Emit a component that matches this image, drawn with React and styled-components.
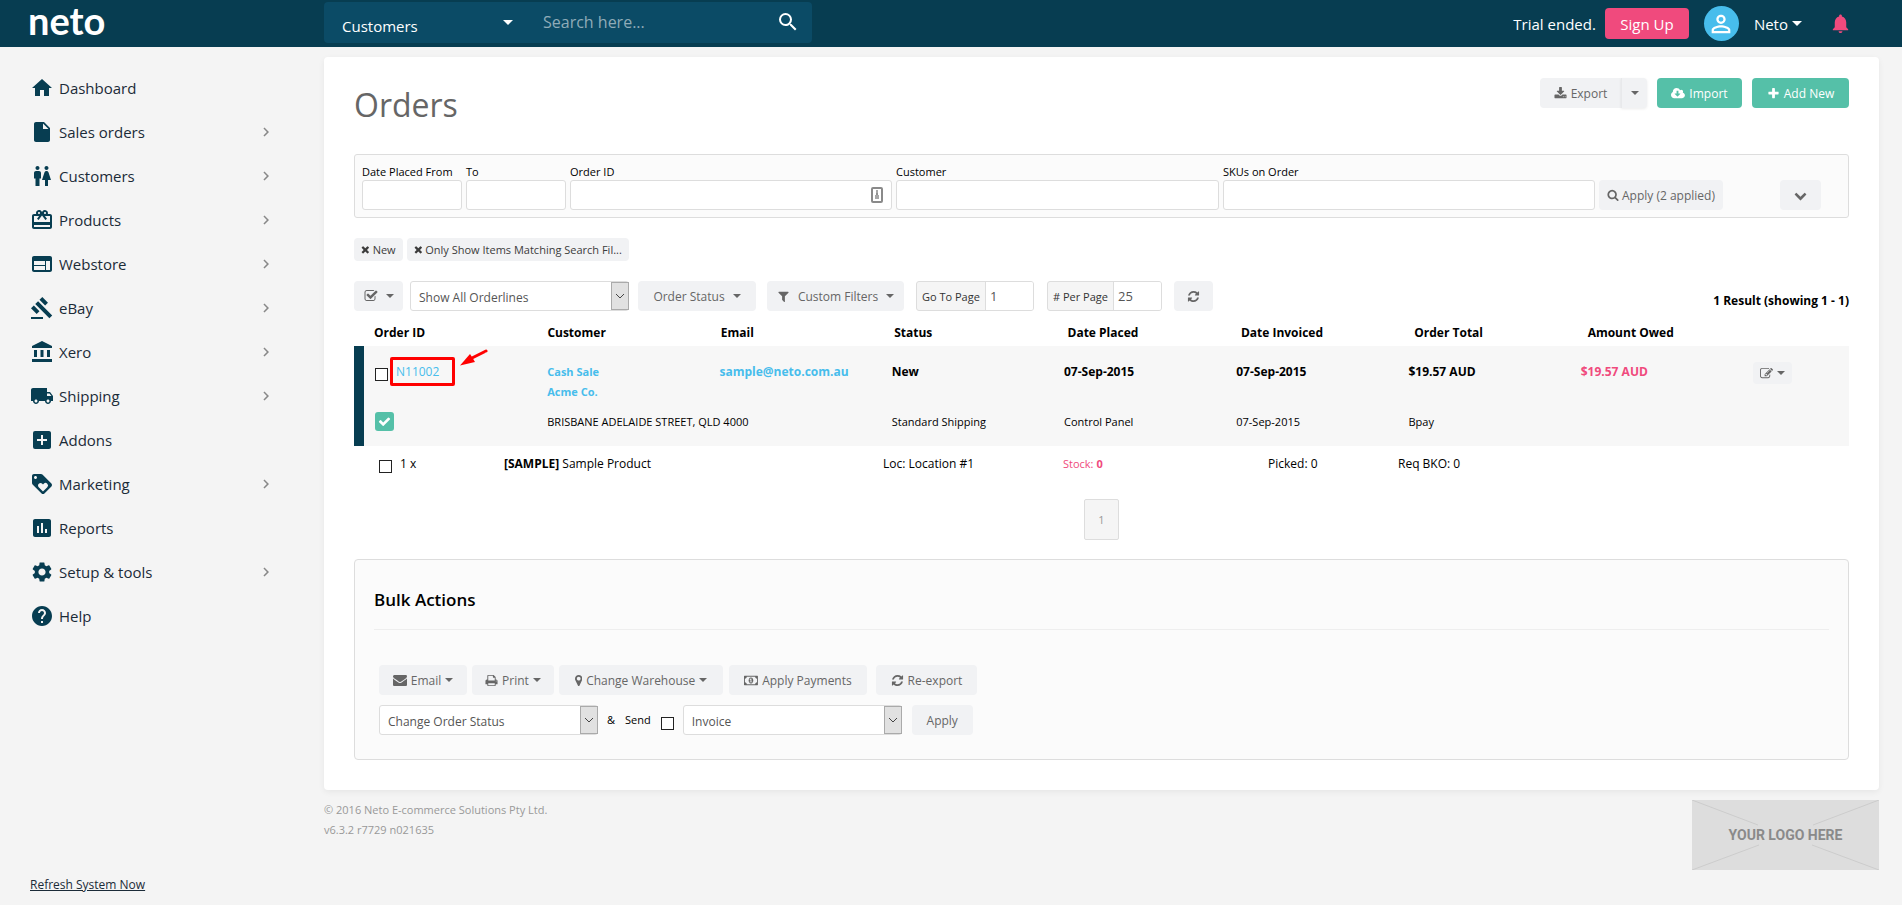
import React, { useState } from 'react'
import styled, { createGlobalStyle, css } from 'styled-components'
import {
    MdHome,
    MdInsertDriveFile,
    MdWc,
    MdCardGiftcard,
    MdWeb,
    MdGavel,
    MdAccountBalance,
    MdLocalShipping,
    MdAddBox,
    MdLoyalty,
    MdAssessment,
    MdSettings,
    MdHelp,
    MdChevronRight,
    MdPersonOutline,
    MdNotifications,
    MdSearch
} from 'react-icons/md'

const NAVY = '#073d51'
const GREEN = '#55c0a8'
const PINK = '#f04a7d'
const BLUE = '#47bdec'

const GlobalStyle = createGlobalStyle`
    *, *::before, *::after {
        box-sizing: border-box;
    }

    body {
        margin: 0;
        background: #f4f4f4;
        color: #000;
        font-family: "Open Sans", "Noto Sans", sans-serif;
        font-size: 12px;
        line-height: 20px;
    }

    button, input, select {
        font-family: inherit;
    }

    a {
        color: inherit;
        text-decoration: none;
    }
`

/* ---------- icons ---------- */

const ICONS = {
    search: 'M1216 832q0-185-131.5-316.5t-316.5-131.5-316.5 131.5-131.5 316.5 131.5 316.5 316.5 131.5 316.5-131.5 131.5-316.5zm512 832q0 52-38 90t-90 38q-54 0-90-38l-343-342q-179 124-399 124-143 0-273.5-55.5t-225-150-150-225-55.5-273.5 55.5-273.5 150-225 225-150 273.5-55.5 273.5 55.5 225 150 150 225 55.5 273.5q0 220-124 399l343 343q37 37 37 90z',
    plus: 'M1600 736v192q0 40-28 68t-68 28h-416v416q0 40-28 68t-68 28h-192q-40 0-68-28t-28-68v-416h-416q-40 0-68-28t-28-68v-192q0-40 28-68t68-28h416v-416q0-40 28-68t68-28h192q40 0 68 28t28 68v416h416q40 0 68 28t28 68z',
    times: 'M1490 1322q0 40-28 68l-136 136q-28 28-68 28t-68-28l-294-294-294 294q-28 28-68 28t-68-28l-136-136q-28-28-28-68t28-68l294-294-294-294q-28-28-28-68t28-68l136-136q28-28 68-28t68 28l294 294 294-294q28-28 68-28t68 28l136 136q28 28 28 68t-28 68l-294 294 294 294q28 28 28 68z',
    check: 'M1671 566q0 40-28 68l-724 724-136 136q-28 28-68 28t-68-28l-136-136-362-362q-28-28-28-68t28-68l136-136q28-28 68-28t68 28l294 295 656-657q28-28 68-28t68 28l136 136q28 28 28 68z',
    chevronDown: 'M1683 808l-742 741q-19 19-45 19t-45-19l-742-741q-19-19-19-45.5t19-45.5l166-165q19-19 45-19t45 19l531 531 531-531q19-19 45-19t45 19l166 165q19 19 19 45.5t-19 45.5z',
    download: 'M1344 1344q0-26-19-45t-45-19-45 19-19 45 19 45 45 19 45-19 19-45zm256 0q0-26-19-45t-45-19-45 19-19 45 19 45 45 19 45-19 19-45zm128-224v320q0 40-28 68t-68 28h-1472q-40 0-68-28t-28-68v-320q0-40 28-68t68-28h465l135 136q58 56 136 56t136-56l136-136h464q40 0 68 28t28 68zm-325-569q17 41-14 70l-448 448q-18 19-45 19t-45-19l-448-448q-31-29-14-70 17-39 59-39h256v-448q0-26 19-45t45-19h256q26 0 45 19t19 45v448h256q42 0 59 39z',
    cloud: 'M1216 928q0-14-9-23t-23-9h-224v-352q0-13-9.5-22.5t-22.5-9.5h-192q-13 0-22.5 9.5t-9.5 22.5v352h-224q-13 0-22.5 9.5t-9.5 22.5q0 14 9 23l352 352q9 9 23 9t23-9l351-351q10-12 10-24zm640 224q0 159-112.5 271.5t-271.5 112.5h-1088q-185 0-316.5-131.5t-131.5-316.5q0-130 70-240t188-165q-2-30-2-43 0-212 150-362t362-150q156 0 285.5 87t188.5 231q71-62 166-62 106 0 181 75t75 181q0 76-41 138 130 31 213.5 135.5t83.5 238.5z',
    filter: 'M1595 295q17 41-14 70l-493 493v742q0 42-39 59-13 5-25 5-27 0-45-19l-256-256q-19-19-19-45v-486l-493-493q-31-29-14-70 17-39 59-39h1280q42 0 59 39z',
    refresh: 'M1639 1056q0 5-1 7-64 268-268 434.5t-478 166.5q-146 0-282.5-55t-243.5-157l-129 129q-19 19-45 19t-45-19-19-45v-448q0-26 19-45t45-19h448q26 0 45 19t19 45-19 45l-137 137q71 66 161 102t187 36q134 0 250-65t186-179q11-17 53-117 8-23 30-23h192q13 0 22.5 9.5t9.5 22.5zm25-800v448q0 26-19 45t-45 19h-448q-26 0-45-19t-19-45 19-45l138-138q-148-137-349-137-134 0-250 65t-186 179q-11 17-53 117-8 23-30 23h-199q-13 0-22.5-9.5t-9.5-22.5v-7q65-268 270-434.5t480-166.5q146 0 284 55.5t245 156.5l130-129q19-19 45-19t45 19 19 45z',
    checkSquare: 'M1472 930v318q0 119-84.5 203.5t-203.5 84.5h-832q-119 0-203.5-84.5t-84.5-203.5v-832q0-119 84.5-203.5t203.5-84.5h832q63 0 117 25 15 7 18 23 3 17-9 29l-49 49q-10 10-23 10-3 0-9-2-23-6-45-6h-832q-66 0-113 47t-47 113v832q0 66 47 113t113 47h832q66 0 113-47t47-113v-254q0-13 9-22l64-64q10-10 23-10 6 0 12 3 20 8 20 29zm231-489l-814 814q-24 24-57 24t-57-24l-430-430q-24-24-24-57t24-57l110-110q24-24 57-24t57 24l263 263 647-647q24-24 57-24t57 24l110 110q24 24 24 57t-24 57z',
    edit: 'M888 1184l116-116-152-152-116 116v56h96v96h56zm440-720q-16-16-33 1l-350 350q-17 17-1 33t33-1l350-350q17-17 1-33zm80 594v190q0 119-84.5 203.5t-203.5 84.5h-832q-119 0-203.5-84.5t-84.5-203.5v-832q0-119 84.5-203.5t203.5-84.5h832q63 0 117 25 15 7 18 23 3 17-9 29l-49 49q-14 14-32 8-23-6-45-6h-832q-66 0-113 47t-47 113v832q0 66 47 113t113 47h832q66 0 113-47t47-113v-126q0-13 9-22l64-64q15-15 35-7t20 29zm-96-738l288 288-672 672h-288v-288zm444 132l-92 92-288-288 92-92q28-28 68-28t68 28l152 152q28 28 28 68t-28 68z',
    envelope: 'M1792 710v794q0 66-47 113t-113 47h-1472q-66 0-113-47t-47-113v-794q44 49 101 87 362 246 497 345 57 42 92.5 65.5t94.5 48 110 24.5h2q51 0 110-24.5t94.5-48 92.5-65.5q170-123 498-345 57-39 100-87zm0-294q0 79-49 151t-122 123q-376 261-468 325-10 7-42.5 31t-54 38.5-52 32.5-57.5 27-50 9h-2q-23 0-50-9t-57.5-27-52-32.5-54-38.5-42.5-31q-91-64-262-182.5t-205-142.5q-62-42-117-115.5t-55-136.5q0-78 41.5-130t118.5-52h1472q65 0 112.5 47t47.5 113z',
    print: 'M448 1536h896v-256h-896v256zm0-640h896v-384h-160q-40 0-68-28t-28-68v-160h-640v640zm1152 64q0-26-19-45t-45-19-45 19-19 45 19 45 45 19 45-19 19-45zm128 0v416q0 13-9.5 22.5t-22.5 9.5h-224v160q0 40-28 68t-68 28h-960q-40 0-68-28t-28-68v-160h-224q-13 0-22.5-9.5t-9.5-22.5v-416q0-79 56.5-135.5t135.5-56.5h64v-544q0-40 28-68t68-28h672q40 0 88 20t76 48l152 152q28 28 48 76t20 88v256h64q79 0 135.5 56.5t56.5 135.5z',
    marker: 'M1152 640q0-106-75-181t-181-75-181 75-75 181 75 181 181 75 181-75 75-181zm256 0q0 109-33 179l-364 774q-16 33-47.5 52t-67.5 19-67.5-19-46.5-52l-365-774q-33-70-33-179 0-212 150-362t362-150 362 150 150 362z',
    money: 'M768 1152h384v-96h-128v-448h-114l-148 137 77 80q42-37 55-57h2v288h-128v96zm512-256q0 70-21 142t-59.5 134-101.5 101-138 39-138-39-101.5-101-59.5-134-21-142 21-142 59.5-134 101.5-101 138-39 138 39 101.5 101 59.5 134 21 142zm512 256v-512q-106 0-181-75t-75-181h-1152q0 106-75 181t-181 75v512q106 0 181 75t75 181h1152q0-106 75-181t181-75zm128-832v1152q0 26-19 45t-45 19h-1792q-26 0-45-19t-19-45v-1152q0-26 19-45t45-19h1792q26 0 45 19t19 45z'
}

const BOXES = {
    cloud: '-64 0 1920 1792',
    money: '0 0 1920 1792',
    marker: '384 0 1024 1792',
    times: '192 0 1408 1792'
}

const Svg = styled.svg`
    flex: none;
    height: ${({ $size }) => $size}px;
    fill: currentColor;
`

const Icon = ({ name, size = 13 }) => (
    <Svg $size={size} viewBox={BOXES[name] || '0 0 1792 1792'} aria-hidden="true">
        <path d={ICONS[name]} />
    </Svg>
)

const Caret = styled.span`
    flex: none;
    width: 0;
    height: 0;
    border-left: 4px solid transparent;
    border-right: 4px solid transparent;
    border-top: 4px solid currentColor;
    margin-left: ${({ $space = 0 }) => $space}px;
`

/* ---------- header ---------- */

const Header = styled.header`
    display: flex;
    align-items: center;
    height: 47px;
    padding-right: 50px;
    background: ${NAVY};
    color: #fff;
    font-size: 15px;
`

const Brand = styled.div`
    flex: none;
    width: 324px;
    padding-left: 28px;
`

const BrandLink = styled.a`
    display: block;
    font-family: Lato, "Open Sans", sans-serif;
    font-size: 38px;
    font-weight: 700;
    line-height: 38px;
    padding-bottom: 8px;
`

const SearchBar = styled.form`
    display: flex;
    align-items: center;
    width: 488px;
    height: 41px;
    margin-bottom: 3px;
    border-radius: 4px;
    background: #0b4b66;
`

const SearchScope = styled.label`
    position: relative;
    display: flex;
    align-items: center;
    width: 200px;

    ${Caret} {
        position: absolute;
        right: 11px;
        border-width: 5px 5px 0;
        pointer-events: none;
    }
`

const ScopeSelect = styled.select`
    appearance: none;
    width: 100%;
    height: 41px;
    padding: 8px 18px 0;
    border: 0;
    background: transparent;
    color: #fff;
    font-size: 15px;
`

const SearchInput = styled.input`
    flex: 1;
    min-width: 0;
    padding: 0 0 0 19px;
    border: 0;
    background: transparent;
    color: #fff;
    font-size: 16px;

    &::placeholder {
        color: #8fabb8;
    }
`

const SearchButton = styled.button`
    display: flex;
    padding: 0 12px;
    border: 0;
    background: transparent;
    color: #fff;
    font-size: 24px;
`

const Account = styled.div`
    display: flex;
    align-items: center;
    margin-left: auto;
    white-space: nowrap;
`

const SignUp = styled.button`
    height: 31px;
    width: 84px;
    margin: 0 15px 0 9px;
    padding: 0;
    border: 0;
    border-radius: 4px;
    background: ${PINK};
    color: #fff;
    font-size: 15px;
`

const Avatar = styled.span`
    display: flex;
    align-items: center;
    justify-content: center;
    width: 35px;
    height: 35px;
    margin-right: 15px;
    border-radius: 50%;
    background: ${BLUE};
    font-size: 28px;
`

const PlainButton = styled.button`
    display: flex;
    align-items: center;
    padding: 0;
    border: 0;
    background: transparent;
    color: ${({ $color = '#fff' }) => $color};
    font-size: 15px;

    ${Caret} {
        border-width: 5px 5px 0;
    }
`

const Bell = styled(PlainButton)`
    margin-left: 27px;
    font-size: 23px;
`

/* ---------- sidebar ---------- */

const Body = styled.div`
    display: flex;
    align-items: stretch;
    min-height: calc(100vh - 47px);
`

const Sidebar = styled.aside`
    display: flex;
    flex: none;
    flex-direction: column;
    justify-content: space-between;
    width: 324px;
    padding: 19px 0 9px 30px;
`

const NavList = styled.ul`
    margin: 0;
    padding: 0;
    list-style: none;
`

const NavLink = styled.a`
    display: flex;
    align-items: center;
    height: 44px;
    width: 248px;
    color: #1b2b38;
    font-size: 15px;

    svg:first-child {
        width: 24px;
        height: 24px;
        margin-right: 5px;
        color: ${NAVY};
    }
`

const Chevron = styled(MdChevronRight)`
    width: 18px;
    height: 18px;
    margin-left: auto;
    margin-right: 3px;
    color: #888;
`

const RefreshLink = styled.a`
    color: #1b2b38;
    font-size: 12px;
    line-height: 22px;
    text-decoration: underline;
`

/* ---------- content ---------- */

const Content = styled.main`
    flex: 1;
    min-width: 0;
    padding: 10px 23px 0 0;
`

const Card = styled.section`
    padding: 21px 30px 30px;
    border-radius: 4px;
    background: #fff;
    box-shadow: 0 2px 6px rgba(0, 0, 0, 0.06);
`

const TitleRow = styled.div`
    display: flex;
    align-items: flex-start;
    justify-content: space-between;
    height: 76px;
`

const Title = styled.h1`
    margin: 0;
    color: #666;
    font-size: 32px;
    font-weight: 400;
    line-height: 54px;
`

const ButtonRow = styled.div`
    display: flex;
    gap: 10px;
`

const Button = styled.button`
    display: inline-flex;
    align-items: center;
    justify-content: center;
    flex: none;
    gap: ${({ $gap = 4 }) => $gap}px;
    height: 30px;
    width: ${({ $width }) => ($width ? `${$width}px` : 'auto')};
    padding: 0;
    border: 0;
    border-radius: 4px;
    background: #f1f2f4;
    color: #666;
    font-size: 12px;
    white-space: nowrap;

    ${({ $green }) => $green && css`
        background: ${GREEN};
        color: #fff;
    `}
`

const SplitButton = styled.div`
    display: flex;

    ${Button}:first-child {
        border-radius: 4px 0 0 4px;
    }

    ${Button}:last-child {
        border-left: 1px solid #e8e9eb;
        border-radius: 0 4px 4px 0;
        box-shadow: 0 1px 3px rgba(0, 0, 0, 0.08);
    }
`

const Filters = styled.form`
    display: grid;
    grid-template-columns: 100px 100px 322fr 323fr 372fr 124px 94px;
    align-items: end;
    column-gap: 4px;
    padding: 8px 27px 7px 7px;
    border: 1px solid #ddd;
    border-radius: 3px;
    background: #fbfbfb;
`

const Field = styled.label`
    position: relative;
    display: block;
    font-size: 11px;
    line-height: 17px;
    white-space: nowrap;
`

const TextInput = styled.input`
    display: block;
    width: 100%;
    height: 30px;
    padding: 0 6px;
    border: 1px solid #ddd;
    border-radius: 3px;
    background: #fff;
    color: #555;
    font-size: 12px;
`

const CardIcon = styled.svg`
    position: absolute;
    right: 9px;
    bottom: 7px;
    width: 12px;
    height: 16px;
`

const ExpandCell = styled.div`
    display: flex;
    justify-content: flex-end;
`

const Tags = styled.div`
    display: flex;
    gap: 4px;
    margin: 20px 0;
`

const Tag = styled.button`
    display: flex;
    align-items: center;
    gap: 3px;
    height: 23px;
    padding: 0 7px;
    border: 0;
    border-radius: 4px;
    background: #f1f2f4;
    color: #3c3c3c;
    font-size: 11px;
`

const Toolbar = styled.div`
    display: flex;
    align-items: center;
`

const Slot = styled.div`
    margin-right: ${({ $after }) => $after}px;
`

const SelectBox = styled.label`
    position: relative;
    display: block;
    flex: none;
    width: 219px;
    height: 30px;
`

const Select = styled.select`
    appearance: none;
    display: block;
    width: 100%;
    height: 30px;
    padding: 2px 26px 0 8px;
    border: 1px solid #ddd;
    border-radius: 3px;
    background: #fff;
    color: #555;
    font-size: 12px;
`

const SelectArrow = styled.span`
    position: absolute;
    top: 1px;
    right: 0;
    display: flex;
    align-items: center;
    justify-content: center;
    width: 18px;
    height: 28px;
    border: 1px solid #aaa;
    background: #e1e1e1;
    pointer-events: none;
`

const InputGroup = styled.label`
    display: flex;
    flex: none;
    width: ${({ $width }) => $width}px;
    height: 30px;
    border: 1px solid #ddd;
    border-radius: 3px;
    background: #f5f5f5;
    color: #333;
    font-size: 11px;
    line-height: 29px;
    overflow: hidden;
    white-space: nowrap;

    span {
        padding: 0 5px;
    }

    input {
        flex: 1;
        min-width: 0;
        height: 28px;
        padding: 0 4px;
        border: 0;
        border-left: 1px solid #ddd;
        background: #fff;
        color: #555;
        font-size: 13px;
    }
`

const ResultCount = styled.strong`
    margin-left: auto;
    padding-top: 10px;
    font-size: 12px;
    font-weight: 700;
`

/* ---------- orders table ---------- */

const Table = styled.table`
    display: block;
    margin-top: 12px;

    thead, tbody {
        display: block;
    }

    th, td {
        display: block;
        padding: 0;
        text-align: left;
    }
`

const HeadRow = styled.tr`
    display: grid;
    grid-template-columns: repeat(8, minmax(0, 1fr)) 88px;
    padding: 0 0 3px 20px;

    th {
        font-size: 12px;
        font-weight: 700;
    }
`

const OrderRow = styled.tr`
    display: grid;
    grid-template-columns: repeat(8, minmax(0, 1fr)) 96px;
    height: ${({ $height }) => $height}px;
    padding: ${({ $top }) => $top}px 0 0 11px;
    border-left: 10px solid ${NAVY};
    background: #f7f7f7;
    font-size: ${({ $bold }) => ($bold ? 12 : 11)}px;
    font-weight: ${({ $bold }) => ($bold ? 700 : 400)};
    white-space: nowrap;
`

const LineRow = styled.tr`
    display: grid;
    grid-template-columns: 125fr 379fr 180fr 205fr 130fr 451fr;
    padding: 8px 0 25px 25px;
    font-size: 12px;
`

const Check = styled.input`
    appearance: none;
    flex: none;
    width: 13px;
    height: 13px;
    margin: 6px 0 0;
    border: 1px solid #222;
    background: #fff;

    &:checked {
        background: #222;
    }
`

const IdCell = styled.div`
    position: relative;
    display: flex;
    align-items: flex-start;
    gap: 8px;
`

const OrderLink = styled.a`
    color: ${BLUE};
    font-size: 12px;
    font-weight: 400;
`

const Highlight = styled.span`
    position: absolute;
    top: -5px;
    left: 15px;
    width: 65px;
    height: 29px;
    border: 3px solid #f00;
    border-radius: 2px;
`

const Pointer = styled.svg`
    position: absolute;
    top: -13px;
    left: 85px;
    width: 28px;
    height: 18px;
`

const InfoLink = styled.a`
    display: block;
    color: ${BLUE};
    font-size: ${({ $small }) => ($small ? 11 : 12)}px;
`

const Pink = styled.span`
    color: ${PINK};
`

const StockText = styled(Pink)`
    font-size: 11px;
`

const Approved = styled.span`
    display: flex;
    align-items: center;
    justify-content: center;
    width: 19px;
    height: 19px;
    border-radius: 3px;
    background: ${GREEN};
    color: #fff;
`

const EditButton = styled(Button)`
    height: 22px;
`

const Pager = styled.nav`
    display: flex;
    justify-content: center;
`

const PageButton = styled.button`
    width: 35px;
    height: 41px;
    padding: 0;
    border: 1px solid #ddd;
    border-radius: 2px;
    background: #f5f5f5;
    color: #999;
    font-size: 11px;
`

/* ---------- bulk actions ---------- */

const Bulk = styled.section`
    margin-top: 19px;
    padding: 25px 19px 24px;
    border: 1px solid #ddd;
    border-radius: 4px;
    background: #fbfbfb;
`

const BulkTitle = styled.h2`
    margin: 0 0 35px;
    padding-bottom: 14px;
    border-bottom: 1px solid #eee;
    font-size: 17px;
    font-weight: 600;
    line-height: 30px;
`

const BulkRow = styled.div`
    display: flex;
    align-items: center;
    flex-wrap: wrap;
    padding: 0 5px;
    margin-bottom: ${({ $below = 0 }) => $below}px;
`

const SendLabel = styled.label`
    display: flex;
    align-items: flex-start;
    gap: 10px;
    margin: 0 9px;
    font-size: 11px;
    line-height: 18px;
`

/* ---------- footer ---------- */

const Footer = styled.footer`
    display: flex;
    justify-content: space-between;
    padding-top: 10px;
    color: #999;
    font-size: 11px;
`

const LogoBox = styled.div`
    position: relative;
    display: flex;
    align-items: center;
    justify-content: center;
    width: 187px;
    height: 70px;
    background: #ddd;
    color: #8a8a8a;
    font-family: Roboto, sans-serif;
    font-size: 14px;
    font-weight: 700;

    svg {
        position: absolute;
        inset: 0;
    }
`

const menu = [
    { label: 'Dashboard', icon: MdHome },
    { label: 'Sales orders', icon: MdInsertDriveFile, more: true },
    { label: 'Customers', icon: MdWc, more: true },
    { label: 'Products', icon: MdCardGiftcard, more: true },
    { label: 'Webstore', icon: MdWeb, more: true },
    { label: 'eBay', icon: MdGavel, more: true },
    { label: 'Xero', icon: MdAccountBalance, more: true },
    { label: 'Shipping', icon: MdLocalShipping, more: true },
    { label: 'Addons', icon: MdAddBox },
    { label: 'Marketing', icon: MdLoyalty, more: true },
    { label: 'Reports', icon: MdAssessment },
    { label: 'Setup & tools', icon: MdSettings, more: true },
    { label: 'Help', icon: MdHelp }
]

const columns = ['Order ID', 'Customer', 'Email', 'Status', 'Date Placed', 'Date Invoiced', 'Order Total', 'Amount Owed']

const Dropdown = ({ label, options }) => (
    <SelectBox>
        <Select aria-label={label}>
            {options.map(option => <option key={option}>{option}</option>)}
        </Select>
        <SelectArrow>
            <svg width="10" height="6" viewBox="0 0 10 6" fill="none" stroke="#444">
                <path d="M1 1l4 4 4-4" />
            </svg>
        </SelectArrow>
    </SelectBox>
)

const TopBar = () => (
    <Header>
        <Brand>
            <BrandLink href="#home">neto</BrandLink>
        </Brand>
        <SearchBar onSubmit={e => e.preventDefault()}>
            <SearchScope>
                <ScopeSelect aria-label="Search in">
                    <option>Customers</option>
                    <option>Orders</option>
                    <option>Products</option>
                </ScopeSelect>
                <Caret />
            </SearchScope>
            <SearchInput placeholder="Search here..." aria-label="Search" />
            <SearchButton aria-label="Search"><MdSearch /></SearchButton>
        </SearchBar>
        <Account>
            <span>Trial ended.</span>
            <SignUp>Sign Up</SignUp>
            <Avatar><MdPersonOutline /></Avatar>
            <PlainButton>Neto<Caret $space={4} /></PlainButton>
            <Bell $color={PINK} aria-label="Notifications"><MdNotifications /></Bell>
        </Account>
    </Header>
)

const SideMenu = () => (
    <Sidebar>
        <nav>
            <NavList>
                {menu.map(({ label, icon: ItemIcon, more }) => (
                    <li key={label}>
                        <NavLink href="#menu">
                            <ItemIcon />
                            {label}
                            {more && <Chevron />}
                        </NavLink>
                    </li>
                ))}
            </NavList>
        </nav>
        <RefreshLink href="#refresh">Refresh System Now</RefreshLink>
    </Sidebar>
)

const OrderFilters = () => (
    <Filters onSubmit={e => e.preventDefault()}>
        <Field>Date Placed From<TextInput /></Field>
        <Field>To<TextInput /></Field>
        <Field>
            Order ID
            <TextInput />
            <CardIcon viewBox="0 0 12 16" aria-hidden="true">
                <rect x="1" y="1" width="10" height="14" rx="1" fill="#fff" stroke="#8a8a8a" strokeWidth="2" />
                <path d="M6 3v5M5 7h2M4 9h4M4 11h4" stroke="#8a8a8a" strokeWidth="1.5" />
            </CardIcon>
        </Field>
        <Field>Customer<TextInput /></Field>
        <Field>SKUs on Order<TextInput /></Field>
        <Button $gap={3}><Icon name="search" size={12} />Apply (2 applied)</Button>
        <ExpandCell>
            <Button type="button" $width={41} aria-label="More filters"><Icon name="chevronDown" size={13} /></Button>
        </ExpandCell>
    </Filters>
)

const OrdersTable = () => (
    <Table>
        <thead>
            <HeadRow>
                {columns.map(name => <th key={name}>{name}</th>)}
                <th aria-label="Actions" />
            </HeadRow>
        </thead>
        <tbody>
            <OrderRow $height={65} $top={16} $bold>
                <td>
                    <IdCell>
                        <Check type="checkbox" aria-label="Select order N11002" />
                        <OrderLink href="#order">N11002</OrderLink>
                        <Highlight />
                        <Pointer viewBox="0 0 28 18" aria-hidden="true">
                            <path d="M26 2L12 9" stroke="#f00" strokeWidth="3" strokeLinecap="round" />
                            <path d="M0 16.5L10 5l2 3 3 5z" fill="#f00" />
                        </Pointer>
                    </IdCell>
                </td>
                <td>
                    <InfoLink href="#customer" $small>Cash Sale</InfoLink>
                    <InfoLink href="#customer" $small>Acme Co.</InfoLink>
                </td>
                <td><InfoLink href="#email">sample@neto.com.au</InfoLink></td>
                <td>New</td>
                <td>07-Sep-2015</td>
                <td>07-Sep-2015</td>
                <td>$19.57 AUD</td>
                <td><Pink>$19.57 AUD</Pink></td>
                <td>
                    <EditButton $width={39} aria-label="Edit order"><Icon name="edit" size={13} /><Caret /></EditButton>
                </td>
            </OrderRow>
            <OrderRow $height={35} $top={1}>
                <td><Approved><Icon name="check" size={13} /></Approved></td>
                <td>BRISBANE ADELAIDE STREET, QLD 4000</td>
                <td />
                <td>Standard Shipping</td>
                <td>Control Panel</td>
                <td>07-Sep-2015</td>
                <td>Bpay</td>
                <td />
                <td />
            </OrderRow>
            <LineRow>
                <td>
                    <IdCell>
                        <Check type="checkbox" aria-label="Select order line" />
                        1 x
                    </IdCell>
                </td>
                <td><b>[SAMPLE]</b> Sample Product</td>
                <td>Loc: Location #1</td>
                <td><StockText>Stock: <b>0</b></StockText></td>
                <td>Picked: 0</td>
                <td>Req BKO: 0</td>
            </LineRow>
        </tbody>
    </Table>
)

const BulkActions = () => (
    <Bulk>
        <BulkTitle>Bulk Actions</BulkTitle>
        <BulkRow $below={10}>
            <Slot $after={5}><Button $width={88}><Icon name="envelope" size={14} />Email<Caret /></Button></Slot>
            <Slot $after={5}><Button $width={82}><Icon name="print" />Print<Caret /></Button></Slot>
            <Slot $after={6}><Button $width={164}><Icon name="marker" />Change Warehouse<Caret /></Button></Slot>
            <Slot $after={9}><Button $width={138}><Icon name="money" />Apply Payments</Button></Slot>
            <Button $width={101}><Icon name="refresh" />Re-export</Button>
        </BulkRow>
        <BulkRow>
            <Dropdown label="Change order status" options={['Change Order Status', 'New', 'Pick', 'Dispatched']} />
            <SendLabel>
                <span>&amp;</span>
                <span>Send</span>
                <Check type="checkbox" />
            </SendLabel>
            <Slot $after={10}><Dropdown label="Document" options={['Invoice', 'Packing Slip']} /></Slot>
            <Button $width={61}>Apply</Button>
        </BulkRow>
    </Bulk>
)

const App = () => {
    const [page, setPage] = useState('1')
    const [perPage, setPerPage] = useState('25')

    return (
        <>
            <GlobalStyle />
            <TopBar />
            <Body>
                <SideMenu />
                <Content>
                    <Card>
                        <TitleRow>
                            <Title>Orders</Title>
                            <ButtonRow>
                                <SplitButton>
                                    <Button $width={81}><Icon name="download" />Export</Button>
                                    <Button $width={26} aria-label="Export options"><Caret /></Button>
                                </SplitButton>
                                <Button $width={85} $green><Icon name="cloud" />Import</Button>
                                <Button $width={97} $green><Icon name="plus" />Add New</Button>
                            </ButtonRow>
                        </TitleRow>
                        <OrderFilters />
                        <Tags>
                            <Tag><Icon name="times" size={11} />New</Tag>
                            <Tag><Icon name="times" size={11} />Only Show Items Matching Search Fil...</Tag>
                        </Tags>
                        <Toolbar>
                            <Slot $after={7}><Button $width={49} $gap={8} aria-label="Select"><Icon name="checkSquare" size={14} /><Caret /></Button></Slot>
                            <Slot $after={9}><Dropdown label="Orderlines" options={['Show All Orderlines', 'Hide Orderlines']} /></Slot>
                            <Slot $after={11}><Button $width={118} $gap={8}>Order Status<Caret /></Button></Slot>
                            <Slot $after={12}><Button $width={137} $gap={8}><Icon name="filter" />Custom Filters<Caret /></Button></Slot>
                            <Slot $after={13}>
                                <InputGroup $width={118}>
                                    <span>Go To Page</span>
                                    <input value={page} onChange={e => setPage(e.target.value)} />
                                </InputGroup>
                            </Slot>
                            <Slot $after={12}>
                                <InputGroup $width={115}>
                                    <span># Per Page</span>
                                    <input value={perPage} onChange={e => setPerPage(e.target.value)} />
                                </InputGroup>
                            </Slot>
                            <Button $width={39} aria-label="Refresh"><Icon name="refresh" /></Button>
                            <ResultCount>1 Result (showing 1 - 1)</ResultCount>
                        </Toolbar>
                        <OrdersTable />
                        <Pager><PageButton>1</PageButton></Pager>
                        <BulkActions />
                    </Card>
                    <Footer>
                        <div>
                            <div>© 2016 Neto E-commerce Solutions Pty Ltd.</div>
                            <div>v6.3.2 r7729 n021635</div>
                        </div>
                        <LogoBox>
                            <svg width="187" height="70" stroke="#ccc" aria-hidden="true">
                                <path d="M0 0l66 25M187 0l-66 25M0 70l67-25M187 70l-67-25" />
                            </svg>
                            YOUR LOGO HERE
                        </LogoBox>
                    </Footer>
                </Content>
            </Body>
        </>
    )
}

export default App
